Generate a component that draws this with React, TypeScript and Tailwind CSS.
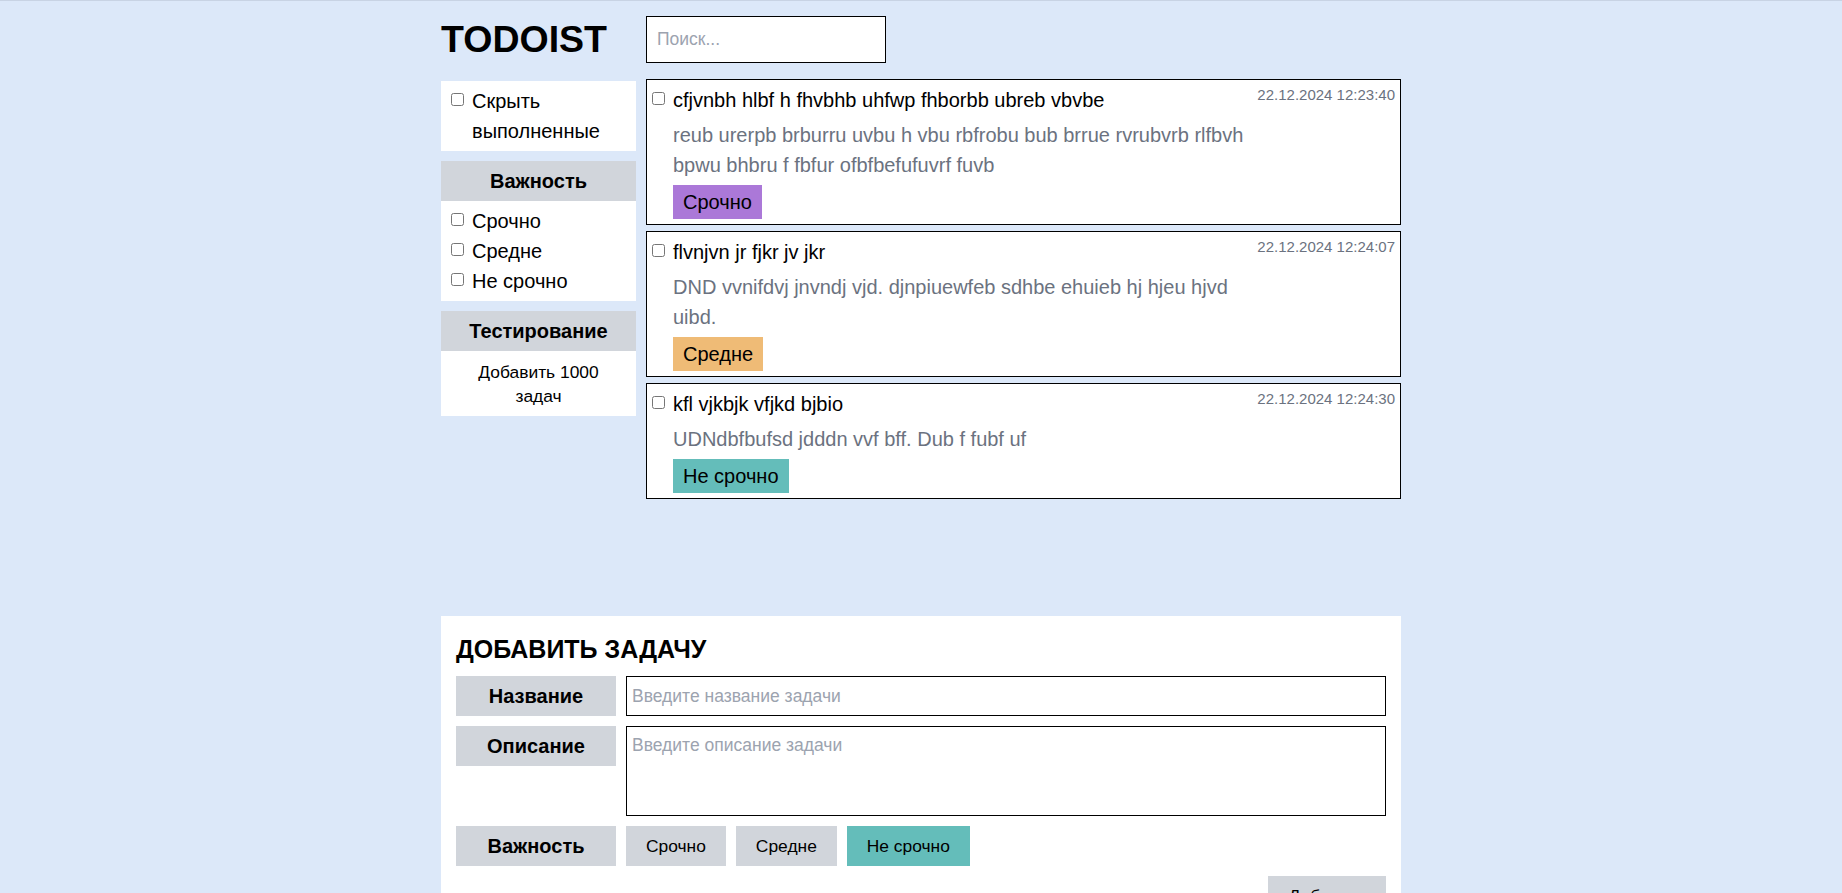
import { useState } from 'react';

type Priority = 'urgent' | 'medium' | 'low';

interface Task {
  id: number;
  title: string;
  description: string;
  priority: Priority;
  createdAt: string;
}

const tasks: Task[] = [
  {
    id: 1,
    title: 'cfjvnbh hlbf h fhvbhb uhfwp fhborbb ubreb vbvbe',
    description:
      'reub urerpb brburru uvbu h vbu rbfrobu bub brrue rvrubvrb rlfbvh bpwu bhbru f fbfur ofbfbefufuvrf fuvb',
    priority: 'urgent',
    createdAt: '22.12.2024 12:23:40',
  },
  {
    id: 2,
    title: 'flvnjvn jr fjkr jv jkr',
    description: 'DND vvnifdvj jnvndj vjd. djnpiuewfeb sdhbe ehuieb hj hjeu hjvd uibd.',
    priority: 'medium',
    createdAt: '22.12.2024 12:24:07',
  },
  {
    id: 3,
    title: 'kfl vjkbjk vfjkd bjbio',
    description: 'UDNdbfbufsd jdddn vvf bff. Dub f fubf uf',
    priority: 'low',
    createdAt: '22.12.2024 12:24:30',
  },
];

const priorityLabel: Record<Priority, string> = {
  urgent: 'Срочно',
  medium: 'Средне',
  low: 'Не срочно',
};

const priorityColor: Record<Priority, string> = {
  urgent: 'bg-[#ab78d8]',
  medium: 'bg-[#efbb76]',
  low: 'bg-[#64bdba]',
};

const SideCheckbox = ({ label }: { label: string }) => (
  <label className="flex items-start text-[20px] leading-[30px]">
    <input type="checkbox" className="mt-[7px] ml-[5px] mr-[8px] h-[13px] w-[13px] shrink-0" />
    <span>{label}</span>
  </label>
);

const SideHeader = ({ children }: { children: React.ReactNode }) => (
  <div className="flex h-[40px] items-center justify-center bg-[#d1d5db] text-[20px] font-bold">
    {children}
  </div>
);

const TaskCard = ({ task }: { task: Task }) => (
  <div className="flex gap-[10px] border border-black bg-white p-[5px]">
    <div className="flex min-w-0 flex-1">
      <input type="checkbox" className="mt-[7px] mr-[8px] h-[13px] w-[13px] shrink-0" />
      <div className="min-w-0 flex-1">
        <div className="text-[20px] leading-[30px]">{task.title}</div>
        <p className="mt-[5px] text-[20px] leading-[30px] text-[#6b7280]">{task.description}</p>
        <span
          className={`mt-[5px] inline-flex h-[34px] items-center px-[10px] text-[20px] ${priorityColor[task.priority]}`}
        >
          {priorityLabel[task.priority]}
        </span>
      </div>
    </div>
    <div className="shrink-0 text-[15px] leading-[19px] text-[#6b7280]">{task.createdAt}</div>
  </div>
);

const FormLabel = ({ children }: { children: React.ReactNode }) => (
  <div className="flex h-[40px] w-[160px] shrink-0 items-center justify-center bg-[#d1d5db] text-[20px] font-bold">
    {children}
  </div>
);

export default function App() {
  const [priority, setPriority] = useState<Priority>('low');

  return (
    <div className="min-h-screen border-t border-[#c8d3e4] bg-[#dce8f9] font-['Liberation_Sans',Arial,sans-serif] text-black">
      <div className="mx-auto w-[960px]">
        {/* Header */}
        <header className="flex h-[78px] items-center gap-[10px] pt-[15px] pb-[16px]">
          <div className="w-[195px] text-[37.5px] leading-[47px] font-bold">TODOIST</div>
          <input
            placeholder="Поиск..."
            className="h-[47px] w-[240px] border border-black bg-white px-[10px] text-[17.5px] outline-none placeholder:text-[#9ca3af]"
          />
        </header>

        <div className="flex h-[537px] items-start gap-[10px]">
          {/* Sidebar */}
          <aside className="mt-[2px] flex w-[195px] shrink-0 flex-col gap-[10px]">
            <div className="bg-white p-[5px]">
              <SideCheckbox label="Скрыть выполненные" />
            </div>
            <div>
              <SideHeader>Важность</SideHeader>
              <div className="bg-white p-[5px]">
                <SideCheckbox label="Срочно" />
                <SideCheckbox label="Средне" />
                <SideCheckbox label="Не срочно" />
              </div>
            </div>
            <div>
              <SideHeader>Тестирование</SideHeader>
              <div className="flex justify-center bg-white pt-[9px] pb-[8px]">
                <button type="button" className="w-[160px] text-center text-[17.4px] leading-[24px]">
                  Добавить 1000 задач
                </button>
              </div>
            </div>
          </aside>

          {/* Task list */}
          <main className="flex flex-1 flex-col gap-[6px]">
            {tasks.map((task) => (
              <TaskCard key={task.id} task={task} />
            ))}
          </main>
        </div>

        {/* Add task form */}
        <section className="bg-white p-[15px]">
          <h2 className="mb-[9px] text-[25px] leading-[36px] font-bold">ДОБАВИТЬ ЗАДАЧУ</h2>
          <div className="flex flex-col gap-[10px]">
            <div className="flex gap-[10px]">
              <FormLabel>Название</FormLabel>
              <input
                placeholder="Введите название задачи"
                className="h-[40px] flex-1 border border-black px-[5px] text-[17.5px] outline-none placeholder:text-[#9ca3af]"
              />
            </div>
            <div className="flex items-start gap-[10px]">
              <FormLabel>Описание</FormLabel>
              <textarea
                placeholder="Введите описание задачи"
                className="h-[90px] flex-1 resize-none border border-black p-[5px] text-[17.5px] leading-[1.5] outline-none placeholder:text-[#9ca3af]"
              />
            </div>
            <div className="flex gap-[10px]">
              <FormLabel>Важность</FormLabel>
              {(['urgent', 'medium', 'low'] as Priority[]).map((p) => (
                <button
                  key={p}
                  type="button"
                  onClick={() => setPriority(p)}
                  className={`h-[40px] px-[20px] text-[17.4px] ${priority === p ? 'bg-[#64bdba]' : 'bg-[#d1d5db]'}`}
                >
                  {priorityLabel[p]}
                </button>
              ))}
            </div>
            <div className="flex justify-end">
              <button type="button" className="h-[40px] w-[118px] bg-[#d1d5db] text-[17.4px]">
                Добавить
              </button>
            </div>
          </div>
        </section>
      </div>
    </div>
  );
}
